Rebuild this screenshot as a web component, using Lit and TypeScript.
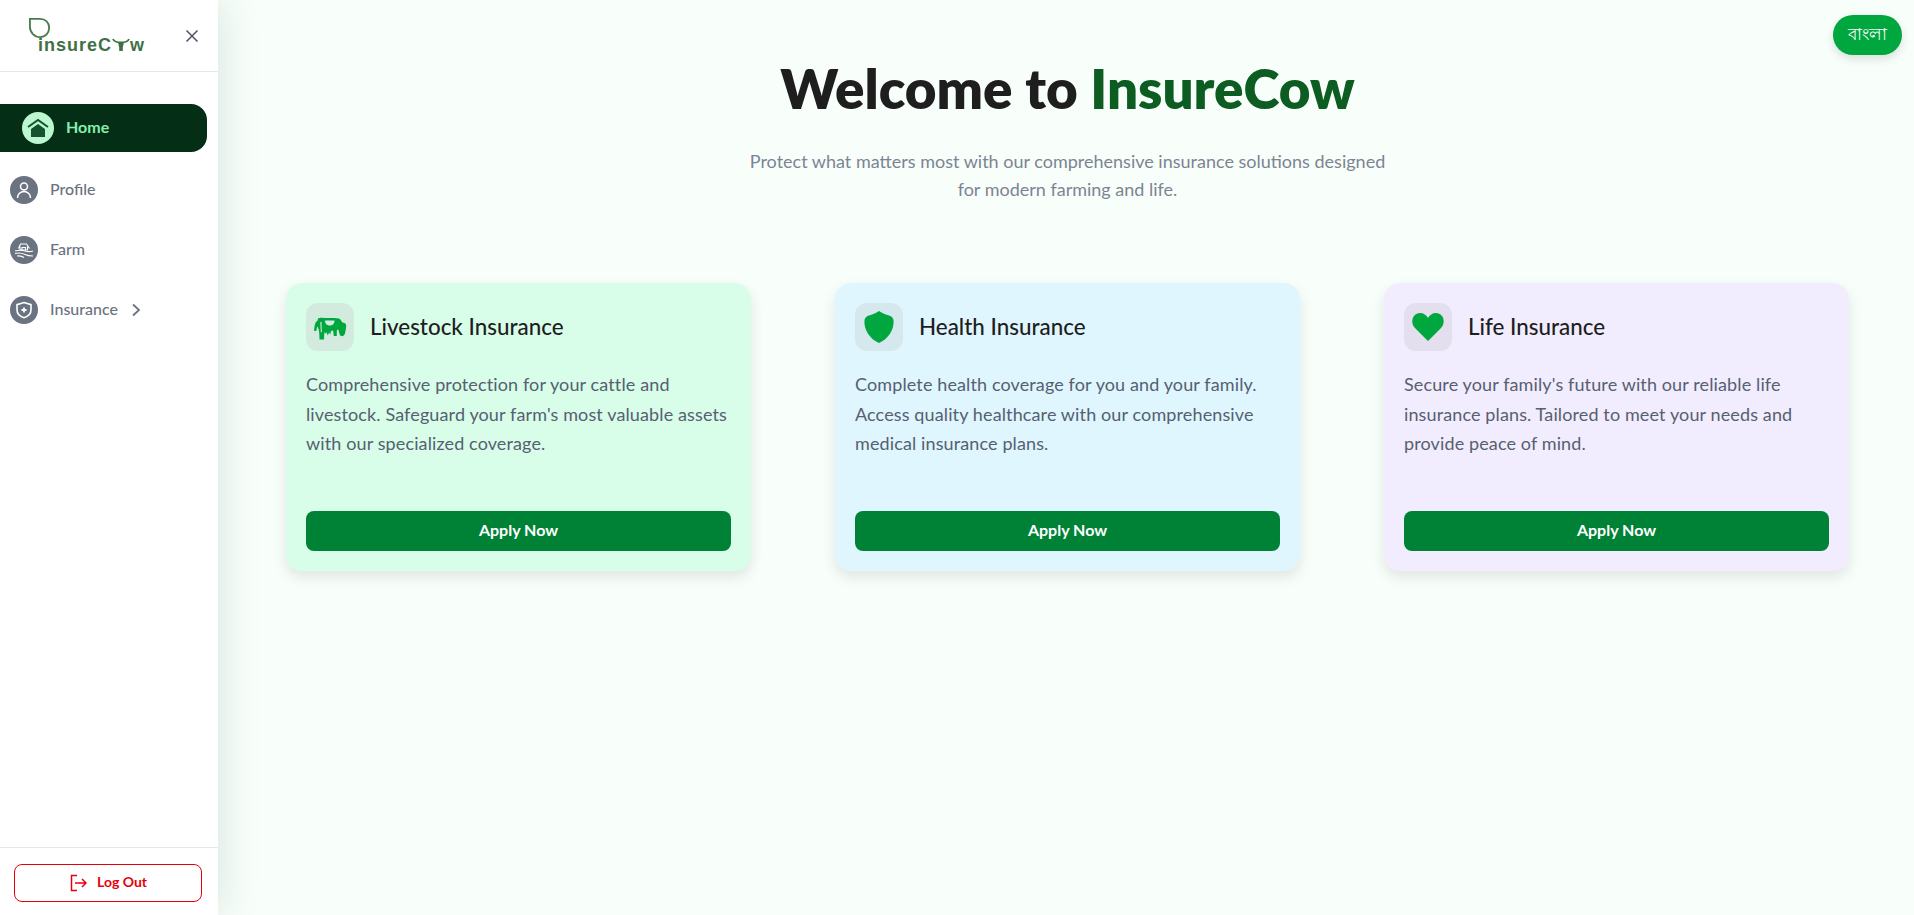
import { LitElement, css, html } from "lit";
import { customElement } from "lit/decorators.js";

const cards = [
	{
		title: "Livestock Insurance",
		text: "Comprehensive protection for your cattle and livestock. Safeguard your farm's most valuable assets with our specialized coverage.",
		tone: "green",
		icon: html`<svg viewBox="0 0 48 48" width="48" height="48">
			<path fill="#00a63e" fill-rule="evenodd" d="M12 15.500C14 14 18 15 22 15c4 0 8-.5 11 .5 1.500.5 2.500 3 3.500 4 1.500.2 3 .8 3.500 2 .5 2-.3 6-1 9-.5 2-2.500 3-4 2.500-1.500-.5-1.800-3.500-2.500-6l-1.500-.5c-.3 2-.2 4.500-.2 6.500h-3c-.3-2-.3-4-.8-5.500l-2 .5-.8 3.500-1.200-2-1.200 3-1.300-3.200-1.300 1.500-.7-2c-.3 2.500-.5 5-.5 7.700h-4.500c0-3.500-.2-7-.7-9.500-.6-1.700-1-3-1.500-3.500-.5 1-.7 3-1 4.500l-2.300-.3c.3-3 .6-6 1.500-8 .6-1.200 1.500-1.700 2-2z"/>
			<path fill="#d3eade" d="M19 17.500h9.500c0 2.700-1.500 5-4.700 5-3.300 0-4.800-2.300-4.800-5z"/>
			<path fill="#d3eade" d="M14.300 19l1.200 0 .3 10-1 .5z"/>
		</svg>`,
	},
	{
		title: "Health Insurance",
		text: "Complete health coverage for you and your family. Access quality healthcare with our comprehensive medical insurance plans.",
		tone: "blue",
		icon: html`<svg viewBox="0 0 48 48" width="48" height="48">
			<path fill="#00a63e" d="M24 8C27 10 31 11.500 34 12.500 36 13 38 14.500 38.500 17 39.500 27 33 36 24 40 15 36 8.500 27 9.500 17 10 14.500 12 13 14 12.500 17 11.500 21 10 24 8z"/>
		</svg>`,
	},
	{
		title: "Life Insurance",
		text: "Secure your family's future with our reliable life insurance plans. Tailored to meet your needs and provide peace of mind.",
		tone: "purple",
		icon: html`<svg viewBox="0 0 48 48" width="48" height="48">
			<path fill="#00a63e" d="M24 38 11 25C6 20 8 10 16 10c3.500 0 6.500 2 8 5 1.500-3 4.500-5 8-5 8 0 10 10 5 15z"/>
		</svg>`,
	},
];

@customElement("app-root")
export class AppRoot extends LitElement {
	static override styles = css`
		:host {
			display: block;
			height: 915px;
			overflow: hidden;
			font-family: Lato, "Noto Sans", sans-serif;
			background: #f8fffa;
		}

		.page {
			display: flex;
			height: 915px;
		}

		.sidebar {
			flex: 0 0 218px;
			display: flex;
			flex-direction: column;
			background: #fff;
			box-shadow: 0 0 40px rgba(30, 50, 40, 0.15);
			z-index: 1;
		}

		.brand {
			display: flex;
			align-items: center;
			justify-content: space-between;
			height: 71px;
			padding: 0 17px 0 29px;
			border-bottom: 1px solid #e5e7eb;
		}

		.logo {
			position: relative;
			width: 120px;
			height: 44px;
		}

		.logo svg.leaf {
			position: absolute;
			left: 0;
			top: 3px;
		}

		.logo-text {
			position: absolute;
			left: 9px;
			top: 22px;
			display: flex;
			align-items: center;
			font: 700 18px/18px "Liberation Sans", sans-serif;
			letter-spacing: 1px;
			color: #3f7044;
		}

		.nav {
			flex: 1;
			display: flex;
			flex-direction: column;
			padding-top: 32px;
		}

		.home {
			display: flex;
			align-items: center;
			gap: 12px;
			width: 207px;
			height: 48px;
			padding-left: 22px;
			margin-bottom: 8px;
			box-sizing: border-box;
			border-radius: 0 16px 16px 0;
			background: #052e16;
			color: #86efac;
			font-size: 16px;
			font-weight: 700;
		}

		.home-icon {
			display: flex;
			align-items: center;
			justify-content: center;
			width: 32px;
			height: 32px;
			border-radius: 50%;
			background: #bbf7d0;
		}

		.item {
			display: flex;
			align-items: center;
			gap: 12px;
			height: 60px;
			padding-left: 10px;
			color: #6b7280;
			font-size: 16px;
			font-weight: 500;
		}

		.label {
			margin-bottom: 3px;
		}

		.item-icon {
			display: flex;
			align-items: center;
			justify-content: center;
			width: 28px;
			height: 28px;
			border-radius: 50%;
			background: #6b7280;
		}

		.foot {
			padding: 16px 16px 13px 14px;
			border-top: 1px solid #e5e7eb;
		}

		.logout {
			display: flex;
			align-items: center;
			justify-content: center;
			gap: 10px;
			height: 38px;
			box-sizing: border-box;
			border: 1px solid #e7000b;
			border-radius: 8px;
			color: #e7000b;
			font-size: 14px;
			font-weight: 700;
		}

		.main {
			position: relative;
			flex: 1;
			padding: 48px 65px 0 68px;
		}

		.lang {
			position: absolute;
			top: 15px;
			right: 12px;
			display: flex;
			align-items: center;
			justify-content: center;
			width: 69px;
			height: 40px;
			border-radius: 20px;
			background: #00a63e;
			color: #fff;
			font-size: 17px;
			box-shadow: 0 4px 10px rgba(0, 0, 0, 0.12);
		}

		h1 {
			margin: 0;
			text-align: center;
			font-size: 54.700px;
			line-height: 80px;
			font-weight: 800;
			color: #1e1e1e;
		}

		h1 span {
			color: #0d5c22;
		}

		.lead {
			width: 650px;
			margin: 19px auto 0;
			text-align: center;
			font-size: 18px;
			line-height: 28px;
			color: #7c8494;
		}

		.cards {
			display: grid;
			grid-template-columns: repeat(3, 465px);
			gap: 84px;
			margin-top: 80px;
		}

		.card {
			display: flex;
			flex-direction: column;
			height: 288px;
			box-sizing: border-box;
			padding: 20px;
			border-radius: 16px;
			box-shadow: 0 6px 14px rgba(0, 0, 0, 0.1);
		}

		.card.green {
			background: #d8fee9;
		}
		.card.blue {
			background: #dff6ff;
		}
		.card.purple {
			background: #f2edfe;
		}

		.card-head {
			display: flex;
			align-items: center;
			gap: 16px;
		}

		.card-icon {
			display: flex;
			width: 48px;
			height: 48px;
			border-radius: 12px;
		}

		.green .card-icon {
			background: #d3eade;
		}
		.blue .card-icon {
			background: #d5e8ee;
		}
		.purple .card-icon {
			background: #e3dfee;
		}

		h3 {
			margin: 0 0 2px;
			font-size: 22.400px;
			font-weight: 500;
			color: #1e1e1e;
		}

		.card p {
			flex: 1;
			margin: 19px 0 0;
			font-size: 18px;
			letter-spacing: 0.12px;
			line-height: 29.700px;
			color: #566070;
		}

		.apply {
			display: flex;
			align-items: center;
			justify-content: center;
			height: 40px;
			box-sizing: border-box;
			padding-bottom: 4px;
			border-radius: 8px;
			background: #008236;
			color: #fff;
			font-size: 16px;
			font-weight: 700;
		}
	`;

	override render() {
		return html`
			<div class="page">
				<aside class="sidebar">
					<div class="brand">
						<div class="logo">
							<svg class="leaf" width="22" height="22" viewBox="0 0 24 24">
								<path fill="none" stroke="#4a7c4f" stroke-width="2" d="M1 2h11c6 0 10 4 10 9.500 0 6-4 10.500-10 10.500C6 22 1 17 1 11z"/>
							</svg>
							<div class="logo-text">insureC<svg width="18" height="14" viewBox="0 0 18 14">
								<path fill="none" stroke="#3f7044" stroke-width="1.800" d="M1 1c1 2.500 4 3.500 8 3.500s7-1 8-3.500"/>
								<path fill="#3f7044" d="M6 4h6l-1.200 5.500v3.500H7.200V9.500z"/>
							</svg>w</div>
						</div>
						<svg width="18" height="18" viewBox="0 0 18 18">
							<path fill="none" stroke="#4b5563" stroke-width="1.500" d="M3.500 3.500l11 11M14.500 3.500l-11 11"/>
						</svg>
					</div>
					<nav class="nav">
						<div class="home">
							<span class="home-icon">
								<svg width="24" height="24" viewBox="0 0 24 24">
									<path fill="none" stroke="#14532d" stroke-width="2" d="M2 11l10-7 10 7"/>
									<path fill="#14532d" d="M5 13l7-5 7 5v8H5z"/>
								</svg>
							</span>
							<span class="label">Home</span>
						</div>
						<div class="item">
							<span class="item-icon">
								<svg width="20" height="20" viewBox="0 0 20 20" fill="none" stroke="#fff" stroke-width="1.500">
									<circle cx="10" cy="6.500" r="3.500"/>
									<path d="M3.500 18c0-4 3-6.500 6.500-6.500s6.500 2.500 6.500 6.500"/>
								</svg>
							</span>
							<span class="label">Profile</span>
						</div>
						<div class="item">
							<span class="item-icon">
								<svg width="24" height="24" viewBox="0 0 24 24" fill="none" stroke="#fff" stroke-width="1.100">
									<path d="M6.500 10.500l2-4.500h6l3 4.500M8 8.500V12h7.500V8.500M10 12V9.500h3.500V12"/>
									<path d="M3 13c4-1 7-1 10 0s5 1 8 0M3 15.500c4-1 7-.5 10 1s5 1.500 8 1.500M5 18c3-.5 5 0 7 1.500"/>
								</svg>
							</span>
							<span class="label">Farm</span>
						</div>
						<div class="item">
							<span class="item-icon">
								<svg width="20" height="20" viewBox="0 0 20 20" fill="none" stroke="#fff" stroke-width="1.600">
									<path d="M10 2.500l7 2.200v5c0 4-3 6.800-7 8-4-1.200-7-4-7-8v-5z"/>
									<path stroke-width="1.800" d="M10 7.500v5M7.500 10h5"/>
								</svg>
							</span>
							<span class="label">Insurance</span>
							<svg width="14" height="14" viewBox="0 0 14 14" fill="none" stroke="#6b7280" stroke-width="1.800">
								<path d="M3 1.500L9 7l-6 5.500"/>
							</svg>
						</div>
					</nav>
					<div class="foot">
						<div class="logout">
							<svg width="18" height="18" viewBox="0 0 18 18" fill="none" stroke="#e7000b" stroke-width="1.500">
								<path d="M8 1.500H2.500v15H8M6 9h11M13 5l4 4-4 4"/>
							</svg>
							<span class="label">Log Out</span>
						</div>
					</div>
				</aside>
				<main class="main">
					<div class="lang">বাংলা</div>
					<h1>Welcome to <span>InsureCow</span></h1>
					<div class="lead">
						Protect what matters most with our comprehensive insurance solutions designed for modern farming and life.
					</div>
					<section class="cards">
						${cards.map(
							(c) => html`
								<article class="card ${c.tone}">
									<div class="card-head">
										<div class="card-icon">${c.icon}</div>
										<h3>${c.title}</h3>
									</div>
									<p>${c.text}</p>
									<div class="apply">Apply Now</div>
								</article>
							`,
						)}
					</section>
				</main>
			</div>
		`;
	}
}
